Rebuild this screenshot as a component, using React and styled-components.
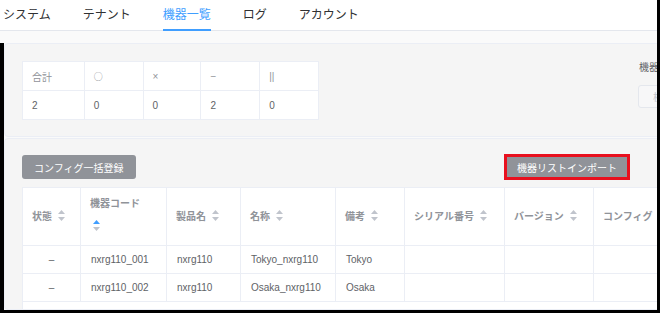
import React from 'react';
import styled, { createGlobalStyle } from 'styled-components';

const GlobalStyle = createGlobalStyle`
  html, body {
    margin: 0;
    padding: 0;
  }
  body {
    font-family: "Liberation Sans", "Noto Sans CJK JP", sans-serif;
    background: #fff;
  }
`;

const Frame = styled.div`
  width: 660px;
  height: 313px;
  box-sizing: border-box;
  border-right: 3px solid #000;
  border-bottom: 3px solid #000;
  display: flex;
  flex-direction: column;
  overflow: hidden;
  background: #fafafa;
`;

const TabBar = styled.nav`
  display: flex;
  gap: 32px;
  height: 31px;
  flex-shrink: 0;
  box-sizing: border-box;
  padding-left: 3px;
  border-bottom: 1px solid #e4e7ed;
  background: #fff;
`;

const Tab = styled.div`
  height: 31px;
  margin-bottom: -1px;
  box-sizing: border-box;
  line-height: 30px;
  font-size: 12px;
  color: ${props => (props.active ? '#409eff' : '#303133')};
  border-bottom: 2px solid ${props => (props.active ? '#409eff' : 'transparent')};
`;

const Spacer = styled.div`
  height: 12px;
  flex-shrink: 0;
`;

const Main = styled.main`
  flex: 1;
  min-height: 0;
  display: flex;
  flex-direction: column;
  border-left: 4px solid #000;
`;

const Panel = styled.section`
  width: 720px;
  flex-shrink: 0;
  box-sizing: border-box;
  background: #f5f5f5;
  border: 1px solid #ebeef5;
  border-radius: 4px;
`;

const SummaryPanel = styled(Panel)`
  height: 94px;
  padding: 17px;
  display: flex;
  gap: 319px;
`;

const ListPanel = styled(Panel)`
  flex: 1;
  min-height: 0;
  margin-top: 1px;
  padding: 15px 17px 0;
  display: flex;
  flex-direction: column;
`;

const SummaryTable = styled.table`
  border-collapse: collapse;
  background: #fff;
  font-size: 10px;
  width: 297px;
  height: 58px;
  td {
    border: 1px solid #ebeef5;
    padding: 0 9px;
    height: 28px;
    color: #606266;
  }
  tr:first-child td {
    color: #909399;
  }
`;

const Mark = styled.span`
  font-family: "Noto Sans CJK JP", sans-serif;
  font-size: ${props => props.size}px;
`;

const SearchBlock = styled.div`
  display: flex;
  flex-direction: column;
  align-items: flex-start;
  flex-shrink: 0;
`;

const SearchLabel = styled.span`
  font-size: 10px;
  color: #606266;
  line-height: 12px;
  margin-top: 1px;
  margin-left: 1px;
`;

const DisabledButton = styled.button`
  margin-top: 11px;
  height: 23px;
  padding: 0 14px;
  font-family: inherit;
  font-size: 10px;
  color: #c0c4cc;
  background: #f7f7f8;
  border: 1px solid #e4e7ed;
  border-radius: 3px;
`;

const Toolbar = styled.div`
  width: 608px;
  height: 26px;
  flex-shrink: 0;
  display: flex;
  justify-content: space-between;
  align-items: center;
  margin-bottom: 7px;
`;

const Button = styled.button`
  height: ${props => (props.highlighted ? '26px' : '24px')};
  padding: 0 ${props => (props.highlighted ? '10px' : '12px')};
  font-family: inherit;
  font-size: 10px;
  color: #fff;
  background: #909399;
  border: ${props => (props.highlighted ? '3px solid #e8101e' : 'none')};
  border-radius: ${props => (props.highlighted ? '0' : '3px')};
  white-space: nowrap;
`;

const TableWrap = styled.div`
  flex: 1;
  background: #fff;
  border-left: 1px solid #ebeef5;
`;

const DataTable = styled.table`
  border-collapse: collapse;
  table-layout: fixed;
  width: 691px;
  font-size: 10px;
  margin-left: -1px;
`;

const Th = styled.th`
  height: 58px;
  padding: 0 9px ${props => (props.stacked ? '6px' : '0')};
  box-sizing: border-box;
  text-align: left;
  font-weight: bold;
  color: #909399;
  border: 1px solid #ebeef5;
  white-space: nowrap;
  line-height: ${props => (props.stacked ? '16px' : '24px')};
`;

const Td = styled.td`
  height: 27px;
  padding: 0 10px;
  color: #606266;
  border: 1px solid #ebeef5;
  text-align: ${props => (props.center ? 'center' : 'left')};
  white-space: nowrap;
`;

const Caret = styled.svg`
  display: ${props => (props.stacked ? 'block' : 'inline-block')};
  vertical-align: middle;
  margin-left: ${props => (props.stacked ? '3px' : '6px')};
  margin-top: ${props => (props.stacked ? '8px' : '-2px')};
`;

const SortIcon = ({ stacked, active }) => (
  <Caret stacked={stacked} width="7" height="11" viewBox="0 0 7 11">
    <path d="M3.5 0 L7 4 L0 4 Z" fill={active ? '#409eff' : '#c0c4cc'} />
    <path d="M0 7 L7 7 L3.5 11 Z" fill="#c0c4cc" />
  </Caret>
);

const tabs = ['システム', 'テナント', '機器一覧', 'ログ', 'アカウント'];

const columns = [
  { label: '状態', width: 58 },
  { label: '機器コード', width: 86, stacked: true, active: true },
  { label: '製品名', width: 74 },
  { label: '名称', width: 95 },
  { label: '備考', width: 69 },
  { label: 'シリアル番号', width: 100 },
  { label: 'バージョン', width: 89 },
  { label: 'コンフィグ', width: 120 },
];

const devices = [
  { code: 'nxrg110_001', product: 'nxrg110', name: 'Tokyo_nxrg110', note: 'Tokyo' },
  { code: 'nxrg110_002', product: 'nxrg110', name: 'Osaka_nxrg110', note: 'Osaka' },
];

export default function App() {
  return (
    <>
      <GlobalStyle />
      <Frame>
        <TabBar>
          {tabs.map(t => (
            <Tab key={t} active={t === '機器一覧'}>{t}</Tab>
          ))}
        </TabBar>
        <Spacer />
        <Main>
          <SummaryPanel>
            <SummaryTable>
              <colgroup>
                <col style={{ width: 62 }} />
                <col style={{ width: 59 }} />
                <col style={{ width: 58 }} />
                <col style={{ width: 59 }} />
                <col style={{ width: 59 }} />
              </colgroup>
              <tbody>
                <tr>
                  <td>合計</td>
                  <td><Mark size={9}>○</Mark></td>
                  <td>×</td>
                  <td>−</td>
                  <td>||</td>
                </tr>
                <tr>
                  <td>2</td>
                  <td>0</td>
                  <td>0</td>
                  <td>2</td>
                  <td>0</td>
                </tr>
              </tbody>
            </SummaryTable>
            <SearchBlock>
              <SearchLabel>機器リスト</SearchLabel>
              <DisabledButton disabled>検索</DisabledButton>
            </SearchBlock>
          </SummaryPanel>
          <ListPanel>
            <Toolbar>
              <Button>コンフィグ一括登録</Button>
              <Button highlighted>機器リストインポート</Button>
            </Toolbar>
            <TableWrap>
              <DataTable>
                <colgroup>
                  {columns.map(c => (
                    <col key={c.label} style={{ width: c.width }} />
                  ))}
                </colgroup>
                <thead>
                  <tr>
                    {columns.map(c => (
                      <Th key={c.label} stacked={c.stacked}>
                        {c.label}
                        <SortIcon stacked={c.stacked} active={c.active} />
                      </Th>
                    ))}
                  </tr>
                </thead>
                <tbody>
                  {devices.map(d => (
                    <tr key={d.code}>
                      <Td center>–</Td>
                      <Td>{d.code}</Td>
                      <Td>{d.product}</Td>
                      <Td>{d.name}</Td>
                      <Td>{d.note}</Td>
                      <Td />
                      <Td />
                      <Td />
                    </tr>
                  ))}
                </tbody>
              </DataTable>
            </TableWrap>
          </ListPanel>
        </Main>
      </Frame>
    </>
  );
}
